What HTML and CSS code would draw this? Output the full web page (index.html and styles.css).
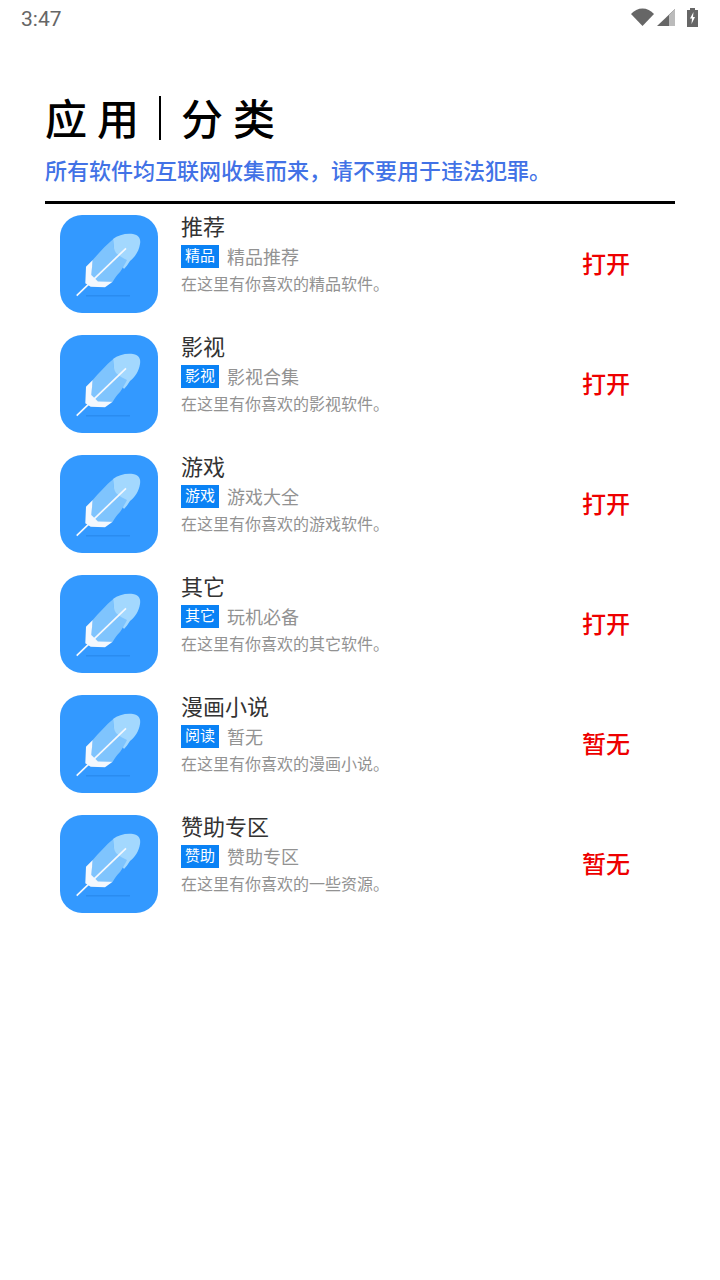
FILE: index.html
```html
<!DOCTYPE html>
<html lang="zh-CN">
<head>
  <meta charset="UTF-8" />
  <title>应用分类</title>
  <link rel="stylesheet" href="styles.css">
</head>
<body>

<svg class="sprite" width="0" height="0">
  <symbol id="feather" viewBox="0 0 98 98">
    <rect width="98" height="98" rx="22" fill="#3399ff"/>
    <rect x="26" y="80" width="44" height="1.5" fill="#2a8cf0"/>
    <path d="M53 24 C58 20 66 18 73 19 C79 20 81 24 80 29 C79 36 75 42 70 46 C68 49 66 52 64 54 L54 40 Z" fill="#a3d8fe"/>
    <path d="M32.7 45 C39 38 46 30 53.300 24 C53 30 54 35 56 38 C59 41 63 43 67 45 C65 49 62 54 60 57 C57 60 55 63 52.700 66.700 L38 67 L31 61 Z" fill="#7fc4fd"/>
    <path d="M32.7 45 L26 51.700 L25.300 68.300 L30.700 71.700 L45 72.300 L52.700 66.700 L38 66.500 L31.300 60 Z" fill="#f4f8fd"/>
    <path d="M16.700 80.700 L66 33.300" stroke="#f4f8fd" stroke-width="1.700" fill="none"/>
  </symbol>
</svg>

<div class="statusbar">
  <span class="time">3:47</span>
  <div class="status-icons">
    <svg class="wifi" width="23" height="18" viewBox="0 0 23 18"><path d="M0 6 C6 -1.500 17 -1.500 23 6 L11.500 18 Z" fill="#666"/></svg>
    <svg class="signal" width="18" height="17" viewBox="0 0 18 17"><path d="M18 0 L18 17 L0 17 Z" fill="#666"/><path d="M12 6 L18 0 L18 17 L12 17 Z" fill="#bbb"/></svg>
    <svg class="battery" width="11" height="19" viewBox="0 0 11 19"><path d="M3 0 H8 V2 H11 V19 H0 V2 H3 Z" fill="#666"/><path d="M6.500 4 L3 10.500 H5 L4.500 16 L8 9 H6 Z" fill="#fff"/></svg>
  </div>
</div>

<div class="page">
  <h1 class="title"><span>应用</span><i class="bar"></i><span>分类</span></h1>
  <p class="notice">所有软件均互联网收集而来，请不要用于违法犯罪。</p>

  <ul class="list">
    <li class="row">
      <svg class="app-icon"><use href="#feather"/></svg>
      <div class="info">
        <div class="name">推荐</div>
        <div class="meta"><span class="tag">精品</span><span class="sub">精品推荐</span></div>
        <div class="desc">在这里有你喜欢的精品软件。</div>
      </div>
      <a class="action">打开</a>
    </li>
    <li class="row">
      <svg class="app-icon"><use href="#feather"/></svg>
      <div class="info">
        <div class="name">影视</div>
        <div class="meta"><span class="tag">影视</span><span class="sub">影视合集</span></div>
        <div class="desc">在这里有你喜欢的影视软件。</div>
      </div>
      <a class="action">打开</a>
    </li>
    <li class="row">
      <svg class="app-icon"><use href="#feather"/></svg>
      <div class="info">
        <div class="name">游戏</div>
        <div class="meta"><span class="tag">游戏</span><span class="sub">游戏大全</span></div>
        <div class="desc">在这里有你喜欢的游戏软件。</div>
      </div>
      <a class="action">打开</a>
    </li>
    <li class="row">
      <svg class="app-icon"><use href="#feather"/></svg>
      <div class="info">
        <div class="name">其它</div>
        <div class="meta"><span class="tag">其它</span><span class="sub">玩机必备</span></div>
        <div class="desc">在这里有你喜欢的其它软件。</div>
      </div>
      <a class="action">打开</a>
    </li>
    <li class="row">
      <svg class="app-icon"><use href="#feather"/></svg>
      <div class="info">
        <div class="name">漫画小说</div>
        <div class="meta"><span class="tag">阅读</span><span class="sub">暂无</span></div>
        <div class="desc">在这里有你喜欢的漫画小说。</div>
      </div>
      <a class="action">暂无</a>
    </li>
    <li class="row">
      <svg class="app-icon"><use href="#feather"/></svg>
      <div class="info">
        <div class="name">赞助专区</div>
        <div class="meta"><span class="tag">赞助</span><span class="sub">赞助专区</span></div>
        <div class="desc">在这里有你喜欢的一些资源。</div>
      </div>
      <a class="action">暂无</a>
    </li>
  </ul>
</div>

</body>
</html>
```

FILE: styles.css
```css
* {
  box-sizing: border-box;
  margin: 0;
  padding: 0;
  font-family: 'Roboto', 'Noto Sans CJK SC', sans-serif;
}

body {
  background-color: #ffffff;
  width: 720px;
  height: 1280px;
  overflow: hidden;
}

.sprite {
  display: block;
  height: 0;
}

.statusbar {
  height: 38px;
  padding: 0 22px 0 21px;
  display: flex;
  justify-content: space-between;
  align-items: center;
}

.time {
  color: #666666;
  font-size: 21px;
}

.status-icons {
  display: flex;
  align-items: center;
  padding-bottom: 4px;
}

.signal {
  margin-left: 3px;
}

.battery {
  margin-left: 12px;
}

.page {
  padding: 51px 45px 0;
}

.title {
  display: flex;
  align-items: center;
  height: 54px;
  font-size: 42px;
  font-weight: 500;
  letter-spacing: 10px;
  color: #000000;
}

.bar {
  width: 2px;
  height: 44px;
  margin: 4px 20px 0 10px;
  background: #000000;
}

.notice {
  margin-top: 11px;
  height: 36px;
  line-height: 36px;
  font-size: 22px;
  font-weight: 500;
  color: #4272e6;
  white-space: nowrap;
}

.list {
  list-style: none;
  margin-top: 11px;
  border-top: 3px solid #000000;
  padding-top: 11px;
}

.row {
  display: flex;
  align-items: center;
  height: 98px;
  margin-bottom: 22px;
  padding-left: 15px;
}

.app-icon {
  width: 98px;
  height: 98px;
  flex: none;
}

.info {
  flex: 1;
  align-self: flex-start;
  margin: -1px 0 0 23px;
}

.name {
  font-size: 22px;
  line-height: 28px;
  color: #333333;
}

.meta {
  display: flex;
  align-items: center;
  height: 23px;
  margin-top: 3px;
}

.tag {
  width: 38px;
  height: 23px;
  line-height: 23px;
  text-align: center;
  font-size: 15px;
  color: #ffffff;
  background: #0a82f5;
}

.sub {
  margin-left: 8px;
  padding-bottom: 2px;
  font-size: 18px;
  color: #929292;
}

.desc {
  margin-top: 5px;
  font-size: 16px;
  line-height: 24px;
  color: #929292;
}

.action {
  width: 48px;
  margin: 0 45px 4px 0;
  font-size: 24px;
  font-weight: 500;
  color: #ee0000;
  white-space: nowrap;
}
```
